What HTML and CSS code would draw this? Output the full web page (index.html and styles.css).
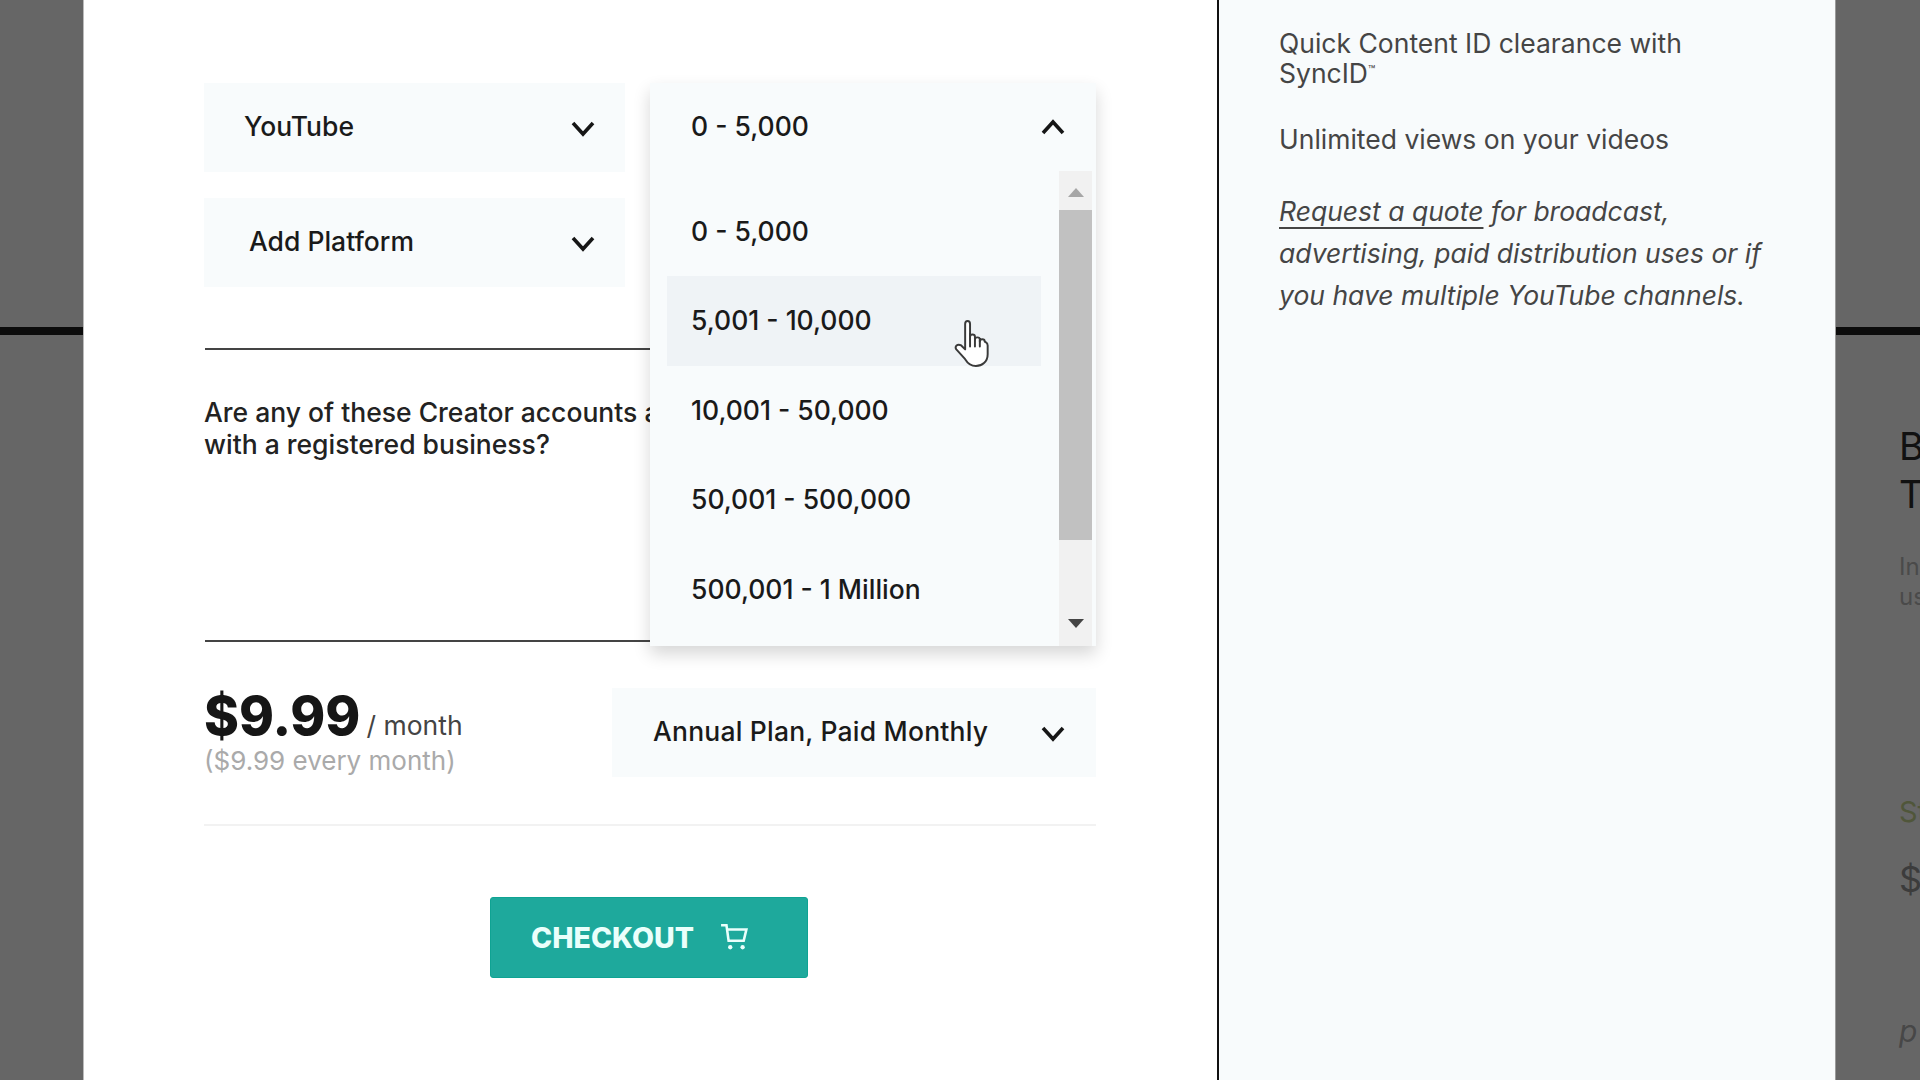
FILE: index.html
```html
<!DOCTYPE html>
<html lang="en">
<head>
<meta charset="utf-8">
<title>Plan checkout</title>
<link rel="stylesheet" href="styles.css">
</head>
<body>
<div class="stage">
  <div class="gutter gutter-left"></div>
  <main class="modal">
    <section class="form">
      <div class="select select-platform"><span>YouTube</span>
        <svg class="chev" viewBox="0 0 24 16"><path d="M2 2l10 11L22 2"/></svg></div>
      <div class="select select-platform select-add"><span>Add Platform</span>
        <svg class="chev" viewBox="0 0 24 16"><path d="M2 2l10 11L22 2"/></svg></div>
      <hr class="rule rule-top">
      <p class="question">Are any of these Creator accounts a<br>with a registered business?</p>
      <hr class="rule rule-bottom">
      <div class="price-row">
        <div class="price">
          <div class="price-main"><strong>$9.99</strong> <span>/ month</span></div>
          <div class="price-note">($9.99 every month)</div>
        </div>
        <div class="select select-plan"><span>Annual Plan, Paid Monthly</span>
          <svg class="chev" viewBox="0 0 24 16"><path d="M2 2l10 11L22 2"/></svg></div>
      </div>
      <hr class="rule-light">
      <div class="actions">
        <button class="checkout" type="button">CHECKOUT
          <svg class="cart" viewBox="0 0 26 24"><path d="M1 1.500h5L8 16h14L24.500 5.500H6"/><circle cx="9.500" cy="22" r="2"/><circle cx="21" cy="22" r="2"/></svg>
        </button>
      </div>

      <div class="dropdown">
        <div class="dropdown-head"><span>0 - 5,000</span>
          <svg class="chev chev-up" viewBox="0 0 24 16"><path d="M2 14L12 3l10 11"/></svg></div>
        <div class="dropdown-body">
          <ul class="options">
            <li>0 - 5,000</li>
            <li class="hover">5,001 - 10,000</li>
            <li>10,001 - 50,000</li>
            <li>50,001 - 500,000</li>
            <li>500,001 - 1 Million</li>
          </ul>
          <div class="scrollbar">
            <div class="arrow arrow-up"></div>
            <div class="thumb"></div>
            <div class="arrow arrow-down"></div>
          </div>
        </div>
      </div>
      <svg class="hand" viewBox="0 0 36 48">
        <path d="M11 4c0-4 5-4 5 0v16l0-3c0-3 5-3 5 0v3c0-3 5-3 5 0v2c0-3 5-3 5 0 1 1 3 1 3 4v9c0 8-6 12-12 12-5 0-8-2-11-7L2 30c-2-3 1-6 5-4l4 4z"/>
        <path d="M16 14v13M21 19v8M26 21v6"/>
      </svg>
    </section>
    <aside class="info">
      <p class="info-line">Quick Content ID clearance with<br>SyncID<sup>™</sup></p>
      <p class="info-line">Unlimited views on your videos</p>
      <p class="info-note"><a class="quote">Request a quote</a> for broadcast,<br>advertising, paid distribution uses or if<br>you have multiple YouTube channels.</p>
    </aside>
  </main>
  <div class="gutter gutter-right">
    <div class="peek-title">B<br>T</div>
    <div class="peek-desc">In<br>us</div>
    <div class="peek-tier">St</div>
    <div class="peek-price">$</div>
    <div class="peek-per">p</div>
  </div>
</div>
</body>
</html>
```

FILE: styles.css
```css
* { box-sizing: border-box; }
html, body { margin: 0; padding: 0; height: 100%; overflow: hidden; }
body { font-family: Inter, "Liberation Sans", sans-serif; font-size: 26.500px; color: #1d1d1d; background: #666; }

.stage { display: flex; width: 1920px; height: 1080px; overflow: hidden; }

.gutter { position: relative; flex: none; background: #666; overflow: hidden; }
.gutter::before { content: ""; position: absolute; left: 0; right: 0; top: 327px; height: 8px; background: #0c0c0c; }
.gutter-left { width: 84px; border-right: 1px solid #bbb; }
.gutter-right { width: 85px; padding: 422px 0 0 63px; border-left: 1px solid #9a9a9a; white-space: nowrap; }

.peek-title { font-size: 38px; line-height: 48px; color: #111; }
.peek-desc { margin-top: 34px; font-size: 24px; line-height: 30px; color: #4a4a4a; }
.peek-tier { margin-top: 182px; font-size: 29px; line-height: 36px; color: #50563a; }
.peek-price { margin-top: 27px; font-size: 36px; line-height: 44px; color: #3c3c3c; }
.peek-per { margin-top: 112px; font-size: 30px; line-height: 36px; font-style: italic; color: #474747; }

.modal { flex: 1; display: flex; background: #fff; min-width: 0; }

.form { position: relative; flex: none; width: 1135px; padding: 83px 121px 0 120px; border-right: 2px solid #111; }

.select { display: flex; align-items: center; justify-content: space-between; height: 89px; background: #f8fbfc; font-weight: 500; color: #1a1a1a; }
.select-platform { width: 421px; padding: 0 30px 0 40px; }
.select-add { margin-top: 26px; padding-left: 45px; }
.select span, .dropdown-head span { margin-top: -3px; }
.chev { flex: none; width: 24px; height: 16px; margin-top: 2px; fill: none; stroke: #161616; stroke-width: 3.600; }
.chev-up { margin-top: -1px; }

.rule { margin: 0 0 0 1px; border: 0; height: 2px; background: #444; }
.rule-top { margin-top: 61px; }

.question { margin: 46px 0 1px; height: 243px; line-height: 32px; font-weight: 500; color: #222; white-space: nowrap; }

.price-row { display: flex; justify-content: space-between; align-items: flex-start; margin-top: 46px; }
.price-main { display: flex; align-items: baseline; gap: 6px; height: 56px; line-height: 56px; color: #444; }
.price-main strong { font-size: 53px; font-weight: 800; color: #161616; }
.price-main span { font-size: 26.500px; }
.price-note { margin-top: 2px; font-size: 26px; line-height: 30px; color: #aaa; }
.select-plan { width: 484px; padding: 0 31px 0 41px; letter-spacing: 0.2px; }

.rule-light { margin: 47px 0 0; border: 0; height: 2px; background: #f2f2f2; }

.actions { display: flex; justify-content: center; margin-top: 71px; padding-right: 2px; }
.checkout { display: flex; align-items: center; gap: 26px; width: 318px; height: 81px; padding: 0 0 0 40px; border: 1px solid #0fa393; border-radius: 3px; background: #1ea99c; font: 800 28.500px Inter, "Liberation Sans", sans-serif; color: #eafffb; }
.cart { flex: none; width: 28px; height: 27px; margin-top: -2px; fill: none; stroke: #eafffb; stroke-width: 2.400; }
.cart circle { fill: #eafffb; stroke: none; }

.dropdown { position: absolute; left: 566px; top: 83px; width: 446px; height: 563px; background: #f8fbfc; box-shadow: 0 8px 16px rgba(0, 0, 0, 0.16); font-weight: 500; color: #1a1a1a; }
.dropdown-head { display: flex; align-items: center; justify-content: space-between; height: 88px; padding: 0 31px 0 41px; }
.dropdown-body { display: flex; height: 475px; }
.options { flex: 1; margin: 0; padding: 16px 18px 0 17px; list-style: none; }
.options li { height: 89.400px; line-height: 89.400px; padding-left: 24px; }
.options li.hover { background: #eff3f6; }
.scrollbar { flex: none; display: flex; flex-direction: column; align-items: center; width: 33px; margin-right: 4px; background: #f1f1f1; }
.thumb { width: 100%; height: 330px; background: #c1c1c1; }
.arrow { width: 0; height: 0; border-left: 8px solid transparent; border-right: 8px solid transparent; }
.arrow-up { margin: 17px 0 13px; border-bottom: 9px solid #a6a6a6; }
.arrow-down { margin-top: 79px; border-top: 9px solid #444; }

.hand { position: absolute; left: 870px; top: 320px; width: 36px; height: 47px; fill: #fff; stroke: #3a3a3a; stroke-width: 2; stroke-linejoin: round; stroke-linecap: round; }

.info { flex: 1; min-width: 0; padding: 28px 0 0 60px; background: #f8fbfc; color: #454545; font-weight: 400; }
.info-line { margin: 0 0 36px; line-height: 30px; }
.info-line sup { font-size: 12px; line-height: 0; vertical-align: 9px; }
.info-note { margin: 0; font-style: italic; line-height: 42px; }
.quote { text-decoration: underline; text-underline-offset: 6px; text-decoration-thickness: 2px; }
```
